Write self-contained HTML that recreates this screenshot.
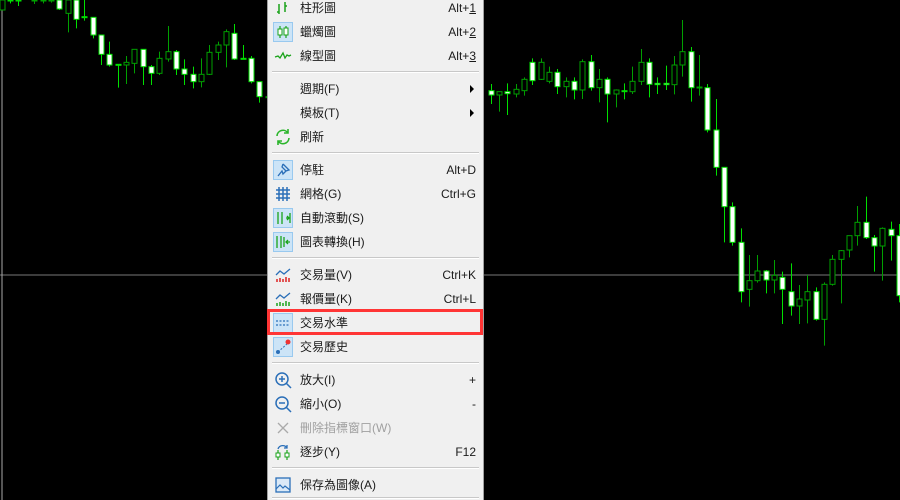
<!DOCTYPE html><html style="overflow:hidden;height:500px"><head><meta charset="utf-8"><style>
body{margin:0;width:900px;height:500px;background:#000;overflow:hidden;position:relative;font-family:"Liberation Sans","Noto Sans CJK TC",sans-serif}
#menu{position:absolute;left:267px;top:-4px;width:215px;height:504px;background:#f0f0f0;border-left:1px solid #a0a0a0;border-right:1px solid #a0a0a0;overflow:hidden}
.r{position:absolute;left:0;width:215px;height:24px;font-size:12px;color:#1a1a1a;line-height:24px}
.r .t{position:absolute;left:32px}
.r .k{position:absolute;right:7px}
.r .ic{position:absolute;left:5px;top:2px;width:20px;height:20px}
.r .ic.h{background:#cce4f7;border:1px solid #99c9ef;box-sizing:border-box}
.sep{position:absolute;left:4px;width:207px;height:0;border-top:1px solid #c8c8c8;border-bottom:1px solid #fff}
.dis{color:#a0a0a0}
.arr{position:absolute;right:9px;top:8px;width:0;height:0;border-left:4px solid #000;border-top:4px solid transparent;border-bottom:4px solid transparent}
#red{position:absolute;left:267px;top:309px;width:210px;height:20px;border:3px solid #ff3535}
</style></head><body>
<svg id="ch" width="900" height="500" style="position:absolute;left:0;top:0">
<line x1="0" y1="275" x2="900" y2="275" stroke="#777" stroke-width="1"/>
<line x1="2" y1="0" x2="2" y2="500" stroke="#aaa" stroke-width="1"/>
<g id="cg"></g>
</svg>
<div id="menu">
<div class="r" style="top:0"><svg class="ic" viewBox="0 0 20 20"><path d="M6 6v10M4 14h2M12 4v10M12 8h2" stroke="#1aa31a" stroke-width="1.5" fill="none"/></svg><span class="t">柱形圖</span><span class="k">Alt+<u>1</u></span></div>
<div class="r" style="top:24px"><div class="ic h"></div><svg class="ic" viewBox="0 0 20 20"><path d="M7 4v12M13 4v12" stroke="#1aa31a" stroke-width="1.2"/><rect x="5" y="7" width="4" height="6" fill="#fff" stroke="#1aa31a"/><rect x="11" y="6" width="4" height="7" fill="#fff" stroke="#1aa31a"/></svg><span class="t">蠟燭圖</span><span class="k">Alt+<u>2</u></span></div>
<div class="r" style="top:48px"><svg class="ic" viewBox="0 0 20 20"><path d="M2 11l3 -1 2 2 3-5 2 5 2-3 2 1 2-1" stroke="#1aa31a" stroke-width="1.3" fill="none"/></svg><span class="t">線型圖</span><span class="k">Alt+<u>3</u></span></div>
<div class="sep" style="top:75px"></div>
<div class="r" style="top:81px"><span class="t">週期(F)</span><div class="arr"></div></div>
<div class="r" style="top:105px"><span class="t">模板(T)</span><div class="arr"></div></div>
<div class="r" style="top:129px"><svg class="ic" viewBox="0 0 20 20"><path d="M4 9a6 6 0 0 1 11-3M16 11a6 6 0 0 1-11 3" stroke="#2ab52a" stroke-width="1.6" fill="none"/><path d="M15 2v4h-4M5 18v-4h4" stroke="#2ab52a" stroke-width="1.6" fill="none"/></svg><span class="t">刷新</span></div>
<div class="sep" style="top:156px"></div>
<div class="r" style="top:162px"><div class="ic h"></div><svg class="ic" viewBox="0 0 20 20"><path d="M10 4l6 6-3 1-3 3-1-3-4 5M10 4l-1 3 4 4" stroke="#2b6fb8" stroke-width="1.3" fill="none"/></svg><span class="t">停駐</span><span class="k">Alt+D</span></div>
<div class="r" style="top:186px"><svg class="ic" viewBox="0 0 20 20"><path d="M6 3v14M10 3v14M14 3v14M3 6h14M3 10h14M3 14h14" stroke="#2b6fb8" stroke-width="1.5"/></svg><span class="t">網格(G)</span><span class="k">Ctrl+G</span></div>
<div class="r" style="top:210px"><div class="ic h"></div><svg class="ic" viewBox="0 0 20 20"><path d="M5 4v12M9 4v12M13 10h3M14 8l2 2-2 2M17 5v10" stroke="#1aa31a" stroke-width="1.3" fill="none"/></svg><span class="t">自動滾動(S)</span></div>
<div class="r" style="top:234px"><div class="ic h"></div><svg class="ic" viewBox="0 0 20 20"><path d="M4 4v12M8 4v12M11 5v10M13 10h4M15 8l-2 2 2 2" stroke="#1aa31a" stroke-width="1.3" fill="none"/></svg><span class="t">圖表轉換(H)</span></div>
<div class="sep" style="top:261px"></div>
<div class="r" style="top:267px"><svg class="ic" viewBox="0 0 20 20"><path d="M3 10l4-4 4 3 6-5" stroke="#2b6fb8" stroke-width="1.3" fill="none"/><path d="M4 17v-3M7 17v-4M10 17v-3M13 17v-5M16 17v-4" stroke="#d22" stroke-width="1.5"/></svg><span class="t">交易量(V)</span><span class="k">Ctrl+K</span></div>
<div class="r" style="top:291px"><svg class="ic" viewBox="0 0 20 20"><path d="M3 10l4-4 4 3 6-5" stroke="#2b6fb8" stroke-width="1.3" fill="none"/><path d="M4 17v-3M7 17v-4M10 17v-3M13 17v-5M16 17v-4" stroke="#1aa31a" stroke-width="1.5"/></svg><span class="t">報價量(K)</span><span class="k">Ctrl+L</span></div>
<div class="r" style="top:315px"><div class="ic h"></div><svg class="ic" viewBox="0 0 20 20"><path d="M3 8h14M3 12h14" stroke="#2b6fb8" stroke-width="1.2" stroke-dasharray="2 1.5"/></svg><span class="t">交易水準</span></div>
<div class="r" style="top:339px"><div class="ic h"></div><svg class="ic" viewBox="0 0 20 20"><path d="M5 15l10-9" stroke="#2b6fb8" stroke-width="1" stroke-dasharray="2 1.5"/><circle cx="5" cy="15" r="2" fill="#2b6fb8"/><circle cx="15" cy="5" r="2.5" fill="#e33"/></svg><span class="t">交易歷史</span></div>
<div class="sep" style="top:366px"></div>
<div class="r" style="top:372px"><svg class="ic" viewBox="0 0 20 20"><circle cx="9" cy="9" r="6" stroke="#2b6fb8" stroke-width="1.5" fill="none"/><path d="M13 13l5 5M6 9h6M9 6v6" stroke="#2b6fb8" stroke-width="1.5"/></svg><span class="t">放大(I)</span><span class="k">+</span></div>
<div class="r" style="top:396px"><svg class="ic" viewBox="0 0 20 20"><circle cx="9" cy="9" r="6" stroke="#2b6fb8" stroke-width="1.5" fill="none"/><path d="M13 13l5 5M6 9h6" stroke="#2b6fb8" stroke-width="1.5"/></svg><span class="t">縮小(O)</span><span class="k">-</span></div>
<div class="r dis" style="top:420px"><svg class="ic" viewBox="0 0 20 20"><path d="M5 5l10 10M15 5L5 15" stroke="#aaa" stroke-width="1.3"/></svg><span class="t">刪除指標窗口(W)</span></div>
<div class="r" style="top:444px"><svg class="ic" viewBox="0 0 20 20"><path d="M5 8v10M14 8v10" stroke="#1aa31a" stroke-width="1.2"/><rect x="3" y="11" width="4" height="4" fill="#fff" stroke="#1aa31a"/><rect x="12" y="11" width="4" height="4" fill="#fff" stroke="#1aa31a"/><path d="M5 7a5 5 0 0 1 9-1M14 3v3h-3" stroke="#2b6fb8" stroke-width="1.3" fill="none"/></svg><span class="t">逐步(Y)</span><span class="k">F12</span></div>
<div class="sep" style="top:471px"></div>
<div class="r" style="top:477px"><svg class="ic" viewBox="0 0 20 20"><rect x="3" y="3" width="14" height="14" fill="#dbe9f7" stroke="#2b6fb8" stroke-width="1.3"/><path d="M3 14l4-4 3 3 2-2 5 4" stroke="#2b6fb8" stroke-width="1.2" fill="none"/></svg><span class="t">保存為圖像(A)</span></div>
<div class="sep" style="top:501px"></div>
</div>
<div id="red"></div>
<script>
var R=[[272,285,252,312,1],[275,285,275,335,0],[275,281,250,345,1],[268,282,252,292,0],[238,272,232,287,0],[187,242,175,255,1],[187,238,175,240,0],[217,244,200,250,0],[217,260,207,282,1],[244,260,232,292,0],[244,270,232,298,1],[185,270,178,297,0],[185,263,165,272,1],[238,263,207,307,0],[238,282,232,367,1],[270,282,268,322,0],[272,275,250,298,1],[244,275,200,282,0],[187,244,147,255,0],[187,253,175,292,1],[250,254,232,282,1],[250,254,197,270,1],[195,254,168,283,0],[155,195,60,230,0],[155,263,141,305,1],[261,263,165,287,0],[263,390,252,397,1],[390,502,297,527,1],[502,620,502,727,1],[620,727,607,737,1],[727,875,685,907,1],[842,868,765,920,0],[813,842,765,848,0],[813,840,810,880,1],[826,840,780,880,0],[832,868,815,972,1],[875,918,790,947,1],[897,918,855,972,0],[875,900,825,970,0],[875,958,862,962,1],[853,958,847,1037,0],[778,853,765,857,0],[752,778,750,910,0],[707,750,707,772,0],[667,707,618,737,0],[667,713,590,717,1],[713,738,705,815,1],[685,738,682,842,0],[688,707,665,782,1],[707,887,672,907,1]];
var L=[[7,0,30,0,30,0],[30,0,2,0,10,1],[55,0,3,0,18,1],[103,0,2,0,12,0],[128,0,2,0,10,0],[153,0,2,0,8,0],[178,0,27,0,30,1],[203,0,40,0,97,0],[228,0,58,0,85,1],[253,50,52,0,62,1],[278,52,105,52,115,1],[303,105,163,105,195,1],[328,163,195,125,200,1],[353,193,195,193,263,1],[378,187,195,168,252,0],[403,148,190,148,220,0],[428,148,200,148,255,1],[453,200,220,195,255,1],[478,175,220,155,225,0],[503,155,177,78,185,0],[528,155,207,150,225,1],[553,207,223,178,255,1],[578,223,245,200,265,1],[603,223,245,175,262,0],[628,157,223,135,225,0],[653,135,157,125,180,0],[678,95,135,88,202,0],[703,100,177,72,180,1],[728,175,177,135,177,1],[753,175,245,168,250,1],[778,245,290,245,308,1],[803,290,292,290,300,0]];
var s='';
function c(x,bt,bb,wt,wb,w){
 s+='<line x1="'+x+'" y1="'+wt+'" x2="'+x+'" y2="'+wb+'" stroke="'+(w?'#00e000':'#00a000')+'" stroke-width="1"/>';
 var h=Math.max(bb-bt,1);
 s+='<rect x="'+(x-2.5)+'" y="'+bt+'" width="5" height="'+h+'" fill="'+(w?'#fff':'#000')+'" stroke="'+(w?'#00e000':'#00a000')+'" stroke-width="1"/>';
}
R.forEach(function(a,i){var x=Math.round(480+(32+25*i)/3)+0.5;c(x,a[0]/3,a[1]/3,a[2]/3,a[3]/3,a[4]);});
L.forEach(function(a){var x=Math.round(a[0]/3)+0.5;c(x,a[1]/3,a[2]/3,a[3]/3,a[4]/3,a[5]);});
document.getElementById('cg').innerHTML=s;
</script>
</body></html>
